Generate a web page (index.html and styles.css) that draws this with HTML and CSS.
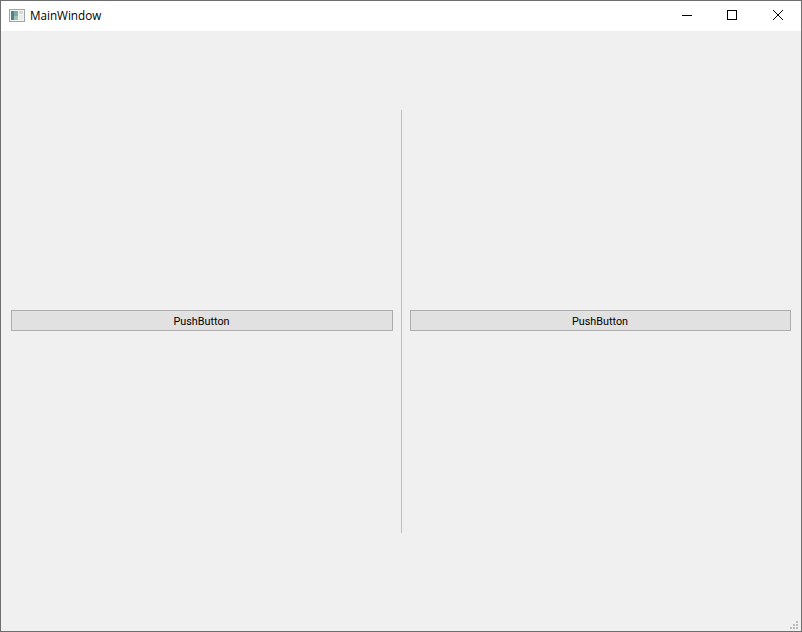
FILE: index.html
```html
<!DOCTYPE html>
<html lang="en">
<head>
<meta charset="utf-8">
<title>MainWindow</title>
<link rel="stylesheet" href="styles.css">
</head>
<body>
<div class="window">
  <header class="titlebar">
    <svg class="app-icon" width="16" height="16" viewBox="0 0 16 16">
      <rect x="0.5" y="1.5" width="15" height="12" fill="#f2f3f3" stroke="#a3a6a8"/>
      <rect x="2" y="3" width="7" height="9" fill="#7fa9a3"/>
      <rect x="2" y="3" width="3" height="9" fill="#557f8a"/>
      <rect x="5" y="8" width="4" height="4" fill="#9cc7ae"/>
      <rect x="10" y="3" width="4" height="3" fill="#d3dadb"/>
      <rect x="10" y="7" width="4" height="5" fill="#e9ecec"/>
    </svg>
    <span class="title">MainWindow</span>
    <div class="controls">
      <div class="control control-min">
        <svg width="10" height="10" viewBox="0 0 10 10"><path d="M0 5.5H10" stroke="#000" fill="none"/></svg>
      </div>
      <div class="control">
        <svg width="10" height="10" viewBox="0 0 10 10"><rect x="0.5" y="0.5" width="9" height="9" stroke="#000" fill="none"/></svg>
      </div>
      <div class="control">
        <svg width="10" height="10" viewBox="0 0 10 10"><path d="M0 0L10 10M10 0L0 10" stroke="#000" stroke-width="1" fill="none"/></svg>
      </div>
    </div>
  </header>
  <main class="content">
    <div class="pane pane-left"><button class="push" type="button">PushButton</button></div>
    <div class="divider"></div>
    <div class="pane pane-right"><button class="push" type="button">PushButton</button></div>
  </main>
  <svg class="grip" width="8" height="8" viewBox="0 0 8 8">
    <g fill="#bdbdbd">
      <rect x="6" y="0" width="2" height="2"/>
      <rect x="3" y="3" width="2" height="2"/>
      <rect x="6" y="3" width="2" height="2"/>
      <rect x="0" y="6" width="2" height="2"/>
      <rect x="3" y="6" width="2" height="2"/>
      <rect x="6" y="6" width="2" height="2"/>
    </g>
  </svg>
</div>
</body>
</html>
```
FILE: styles.css
```css
* { box-sizing: border-box; }
html, body { margin: 0; padding: 0; }
body { width: 802px; height: 632px; overflow: hidden; background: #f0f0f0; }
.window {
  position: relative;
  width: 802px;
  height: 632px;
  border: 1px solid #6e6e6e;
  background: #f0f0f0;
  display: flex;
  flex-direction: column;
  color: #000;
}
.titlebar {
  flex: none;
  height: 30px;
  background: #fff;
  display: flex;
  align-items: center;
  padding-left: 8px;
}
.app-icon { flex: none; margin-right: 5px; }
.title { font-size: 11.7px; line-height: 28px; padding-bottom: 2px; font-family: "Open Sans", "Noto Sans", sans-serif; }
.controls { margin-left: auto; display: flex; height: 100%; }
.control { width: 46px; height: 28px; display: flex; align-items: center; justify-content: center; }
.control-min { width: 44px; }
.content {
  flex: 1;
  display: flex;
  align-items: center;
  padding: 0 10px 20px 10px;
}
.pane { display: flex; align-items: center; padding-bottom: 2px; }
.pane-left { width: 382px; }
.pane-right { width: 381px; }
.divider {
  width: 1px;
  height: 423px;
  background: #f1a9b1;
  margin: 0 8px;
}
.push {
  width: 100%;
  height: 21px;
  margin: 0;
  padding: 2px 1px 0 0;
  border: 1px solid #adadad;
  border-radius: 0;
  background: #e1e1e1;
  color: #000;
  font-family: Roboto, "Noto Sans", sans-serif;
  font-size: 10.8px;
  line-height: 17px;
  text-align: center;
}
.grip { position: absolute; right: 3px; bottom: 2px; }
```
